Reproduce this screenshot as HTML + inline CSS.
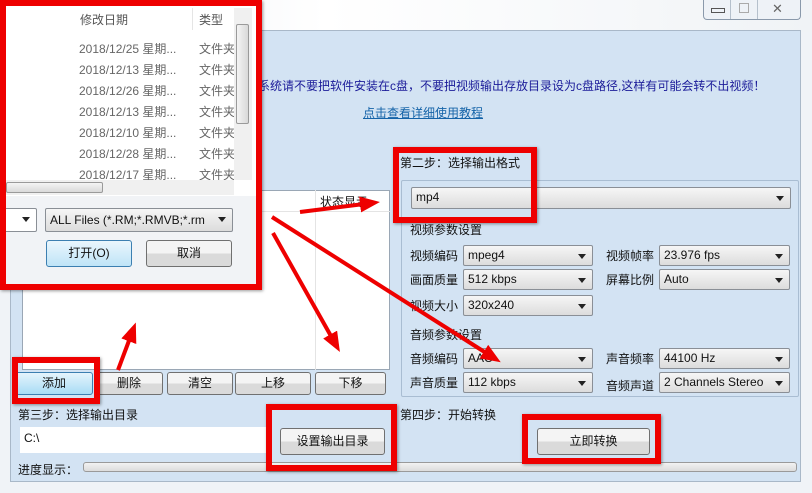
<!DOCTYPE html>
<html><head><meta charset="utf-8"><style>
*{box-sizing:border-box;margin:0;padding:0}
body{width:812px;height:493px;position:relative;overflow:hidden;background:#f0f3f7;font-family:"Liberation Sans","Noto Sans CJK SC",sans-serif;font-size:12px;color:#111}
.a{position:absolute}
.cb{position:absolute;border:1px solid #8a8f96;border-radius:2px;background:linear-gradient(#f6f6f6,#dcdcdc);height:21px;padding:2px 4px;font-size:12px;white-space:nowrap;overflow:hidden}
.cb:after{content:"";position:absolute;right:6px;top:8px;border:4px solid transparent;border-top:5px solid #222}
.bt{position:absolute;border:1px solid #707070;border-radius:3px;background:linear-gradient(#f4f4f4 50%,#dadada 50%);text-align:center;font-size:12px}
.red{position:absolute;border:6px solid #e00;box-shadow:1px 1px 3px rgba(0,0,0,.4)}
</style></head><body>
<div class="a" style="left:0;top:0;width:812px;height:32px;background:linear-gradient(90deg,#e9edf2,#fff 40%,#f0f3f6)"></div>
<div class="a" style="left:703px;top:0;width:98px;height:20px;border:1px solid #8a99ab;border-top:none;border-radius:0 0 4px 4px;background:#eef2f7"></div>
<div class="a" style="left:730px;top:0;width:1px;height:19px;background:#b5c0cc"></div>
<div class="a" style="left:757px;top:0;width:1px;height:19px;background:#b5c0cc"></div>
<div class="a" style="left:711px;top:8px;width:14px;height:5px;border:1px solid #555"></div>
<div class="a" style="left:739px;top:3px;width:10px;height:10px;border:1px solid #aaa"></div>
<div class="a" style="left:772px;top:1px;font-size:13px;color:#666">✕</div>
<div class="a" style="left:10px;top:30px;width:791px;height:452px;background:#d3e3f3;border:1px solid #a9b8c8"></div>
<div class="a" style="left:258px;top:77px;color:#1b1b99;font-size:12px">系统请不要把软件安装在c盘，不要把视频输出存放目录设为c盘路径,这样有可能会转不出视频！</div>
<div class="a" style="left:363px;top:104px;color:#1463a8;text-decoration:underline">点击查看详细使用教程</div>
<div class="a" style="left:22px;top:190px;width:368px;height:180px;background:#fff;border:1px solid #9aa7b5"></div>
<div class="a" style="left:315px;top:190px;width:1px;height:180px;background:#e4e4e4"></div>
<div class="a" style="left:22px;top:211px;width:368px;height:1px;background:#e4e4e4"></div>
<div class="a" style="left:320px;top:193px">状态显示</div>
<div class="bt" style="left:15px;top:372px;width:78px;height:23px;line-height:21px;border-color:#3c7fb1;background:linear-gradient(#e5f4fc,#a8dcf5)">添加</div>
<div class="bt" style="left:95px;top:372px;width:68px;height:23px;line-height:21px">删除</div>
<div class="bt" style="left:167px;top:372px;width:66px;height:23px;line-height:21px">清空</div>
<div class="bt" style="left:235px;top:372px;width:76px;height:23px;line-height:21px">上移</div>
<div class="bt" style="left:315px;top:372px;width:71px;height:23px;line-height:21px">下移</div>
<div class="a" style="left:18px;top:406px">第三步：选择输出目录</div>
<div class="a" style="left:20px;top:427px;width:252px;height:26px;background:#fff;padding:4px 4px">C:\</div>
<div class="bt" style="left:280px;top:428px;width:105px;height:27px;line-height:25px">设置输出目录</div>
<div class="a" style="left:18px;top:461px">进度显示：</div>
<div class="a" style="left:83px;top:462px;width:714px;height:10px;border:1px solid #9a9a9a;border-radius:3px;background:linear-gradient(#f2f2f2,#dcdcdc)"></div>
<div class="a" style="left:400px;top:154px">第二步：选择输出格式</div>
<div class="a" style="left:401px;top:180px;width:398px;height:217px;border:1px solid #a9bdd2;border-radius:2px"></div>
<div class="cb" style="left:411px;top:187px;width:380px;height:22px">mp4</div>
<div class="a" style="left:410px;top:221px">视频参数设置</div>
<div class="a" style="left:410px;top:247px">视频编码</div><div class="cb" style="left:463px;top:245px;width:130px">mpeg4</div>
<div class="a" style="left:606px;top:247px">视频帧率</div><div class="cb" style="left:659px;top:245px;width:131px">23.976 fps</div>
<div class="a" style="left:410px;top:271px">画面质量</div><div class="cb" style="left:463px;top:269px;width:130px">512 kbps</div>
<div class="a" style="left:606px;top:271px">屏幕比例</div><div class="cb" style="left:659px;top:269px;width:131px">Auto</div>
<div class="a" style="left:410px;top:297px">视频大小</div><div class="cb" style="left:463px;top:295px;width:130px">320x240</div>
<div class="a" style="left:410px;top:326px">音频参数设置</div>
<div class="a" style="left:410px;top:350px">音频编码</div><div class="cb" style="left:463px;top:348px;width:130px">AAC</div>
<div class="a" style="left:606px;top:350px">声音频率</div><div class="cb" style="left:659px;top:348px;width:131px">44100 Hz</div>
<div class="a" style="left:410px;top:374px">声音质量</div><div class="cb" style="left:463px;top:372px;width:130px">112 kbps</div>
<div class="a" style="left:606px;top:377px">音频声道</div><div class="cb" style="left:659px;top:372px;width:131px">2 Channels Stereo</div>
<div class="a" style="left:400px;top:406px">第四步：开始转换</div>
<div class="bt" style="left:537px;top:428px;width:113px;height:27px;line-height:25px">立即转换</div>
<div class="a" style="left:0;top:0;width:260px;height:288px;background:#fff"></div>
<div class="a" style="left:6px;top:196px;width:250px;height:88px;background:#f1f3f6"></div>
<div class="a" style="left:80px;top:11px;color:#555">修改日期</div><div class="a" style="left:192px;top:8px;width:1px;height:22px;background:#e5e5e5"></div>
<div class="a" style="left:199px;top:11px;color:#555">类型</div>
<div class="a" style="left:79px;top:39px;color:#666;line-height:21px">2018/12/25 星期...<br>2018/12/13 星期...<br>2018/12/26 星期...<br>2018/12/13 星期...<br>2018/12/10 星期...<br>2018/12/28 星期...<br>2018/12/17 星期...</div>
<div class="a" style="left:199px;top:39px;color:#666;line-height:21px">文件夹<br>文件夹<br>文件夹<br>文件夹<br>文件夹<br>文件夹<br>文件夹</div>
<div class="a" style="left:234px;top:8px;width:18px;height:172px;background:#f0f0f0"></div>
<div class="a" style="left:236px;top:24px;width:13px;height:100px;background:linear-gradient(90deg,#f4f4f4,#d9d9d9);border:1px solid #9a9a9a;border-radius:2px"></div>
<div class="a" style="left:6px;top:180px;width:228px;height:15px;background:#f0f0f0"></div>
<div class="a" style="left:6px;top:182px;width:97px;height:11px;background:linear-gradient(#f4f4f4,#d9d9d9);border:1px solid #9a9a9a;border-radius:2px"></div>
<div class="cb" style="left:3px;top:208px;width:34px;height:24px;background:#fff"></div>
<div class="cb" style="left:45px;top:208px;width:188px;height:24px;padding-top:4px">ALL Files (*.RM;*.RMVB;*.rm</div>
<div class="bt" style="left:46px;top:240px;width:86px;height:27px;line-height:25px;border-color:#3c7fb1;background:linear-gradient(#eaf6fd,#bfe4f7)">打开(O)</div>
<div class="bt" style="left:146px;top:240px;width:86px;height:27px;line-height:25px">取消</div>
<div class="red" style="left:0;top:0;width:262px;height:290px"></div>
<div class="red" style="left:393px;top:147px;width:144px;height:76px"></div>
<div class="red" style="left:12px;top:357px;width:88px;height:47px"></div>
<div class="red" style="left:266px;top:404px;width:131px;height:67px"></div>
<div class="red" style="left:522px;top:414px;width:139px;height:50px"></div>
<svg class="a" style="left:0;top:0" width="812" height="493">
<defs><marker id="m" markerWidth="5" markerHeight="4" refX="3" refY="2" orient="auto"><path d="M0,0L5,2L0,4z" fill="#e00"/></marker></defs>
<g stroke="#e00" stroke-width="4" fill="none" marker-end="url(#m)">
<line x1="300" y1="212" x2="372" y2="203"/>
<line x1="272" y1="217" x2="494" y2="358"/>
<line x1="273" y1="233" x2="336" y2="345"/>
<line x1="118" y1="370" x2="133" y2="330"/>
</g></svg>
</body></html>
